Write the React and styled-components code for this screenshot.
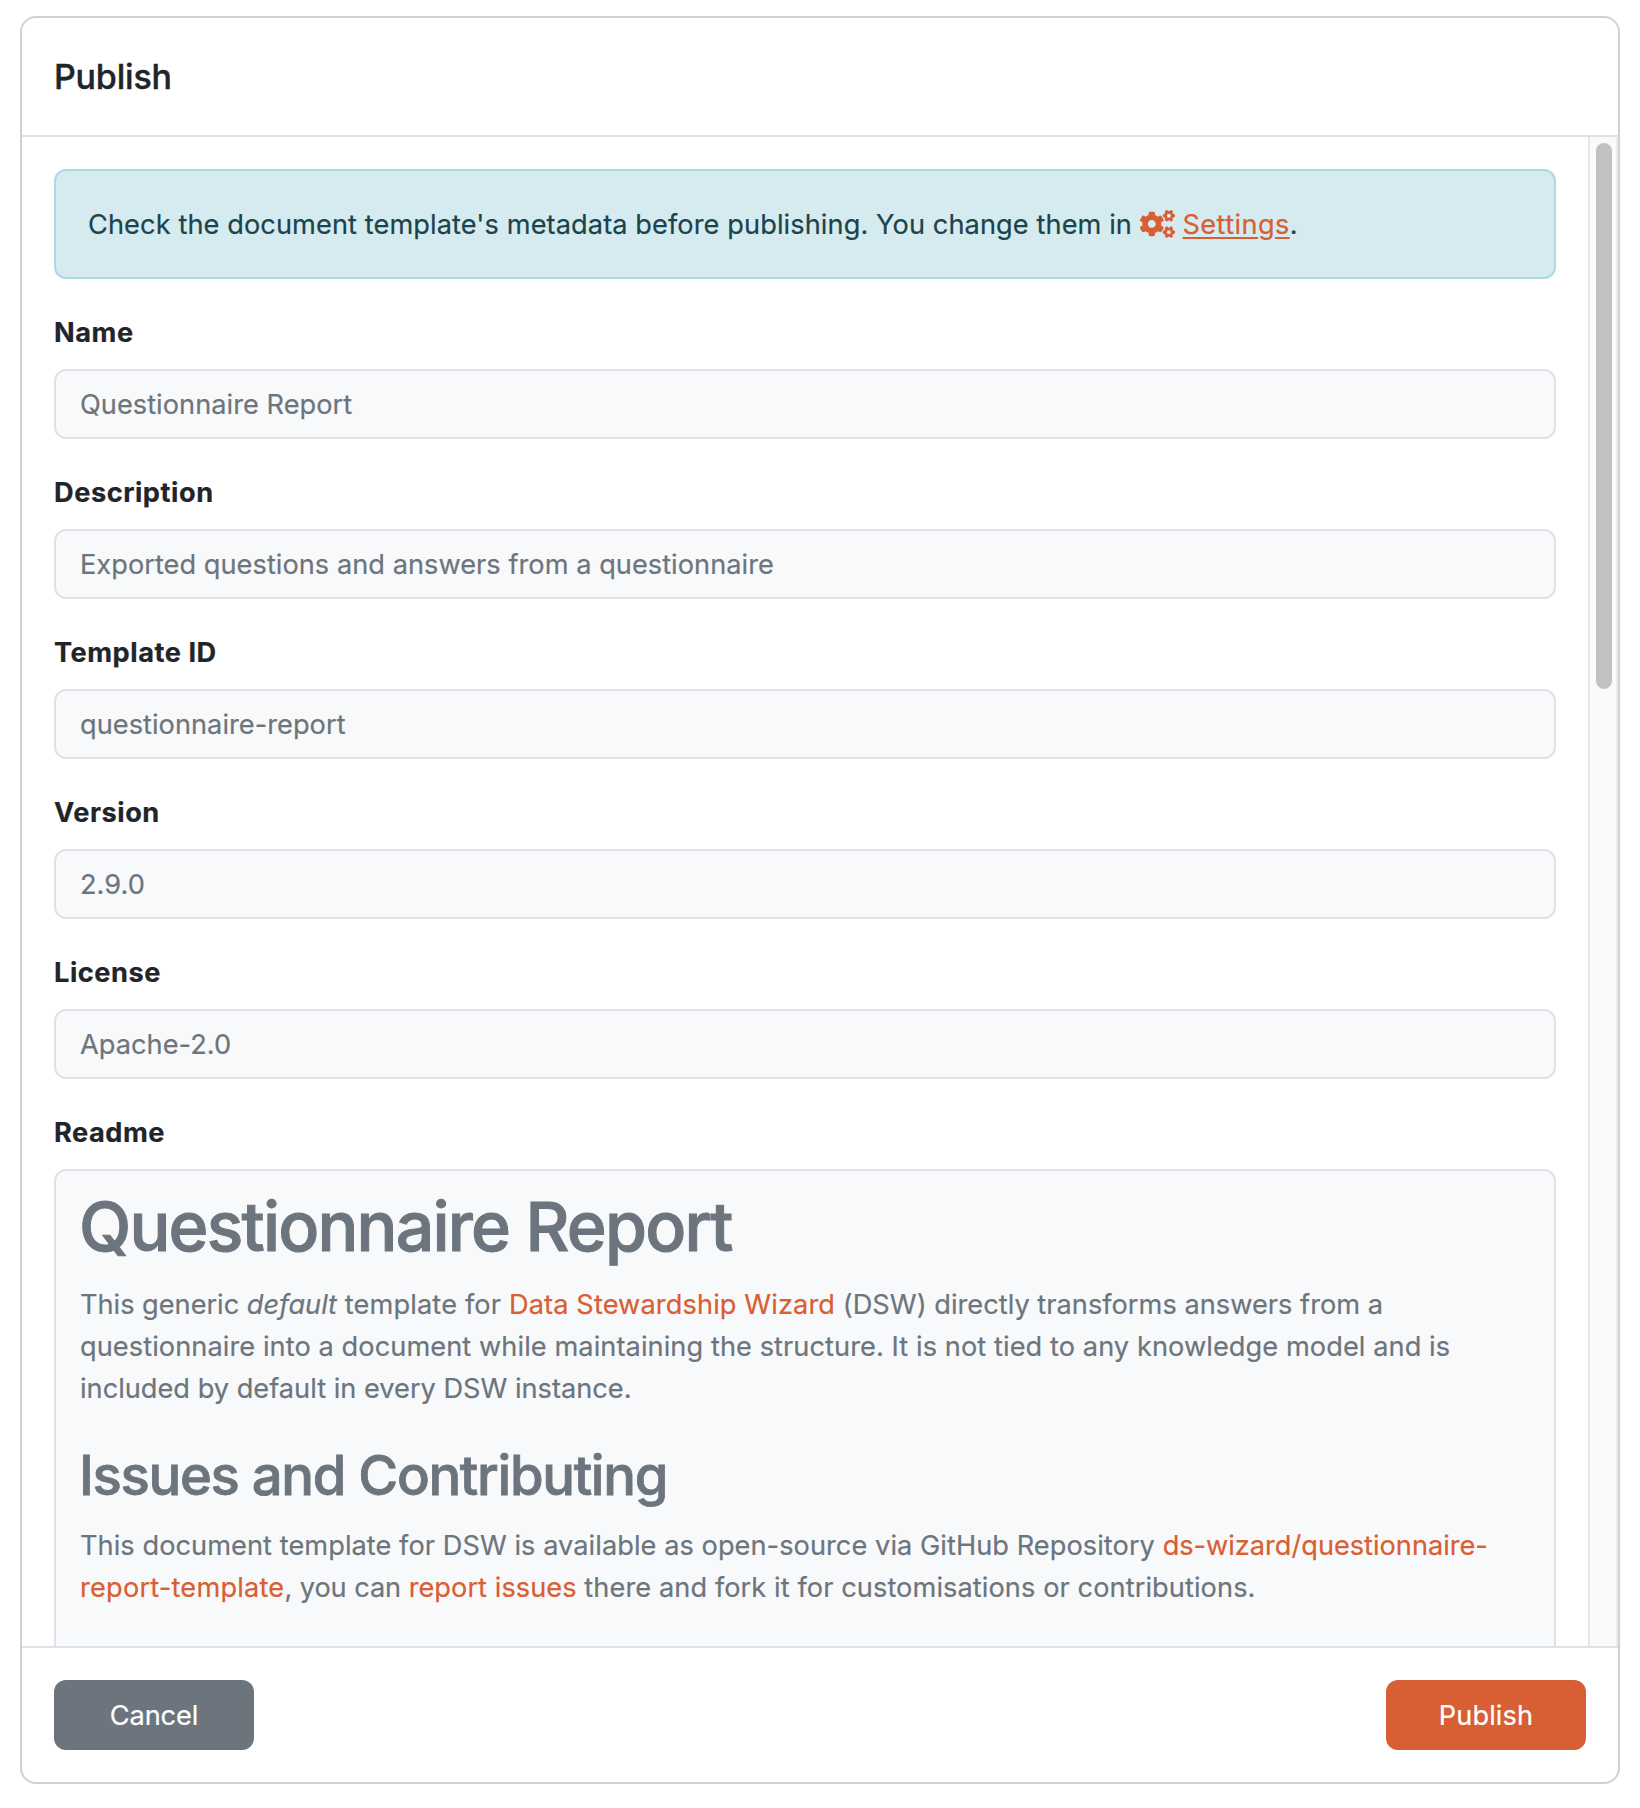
import React from "react";
import styled, { createGlobalStyle } from "styled-components";
import { FaCogs } from "react-icons/fa";

const GlobalStyle = createGlobalStyle`
  *, *::before, *::after { box-sizing: border-box; }
  body {
    margin: 0;
    background: #fff;
    color: #212529;
    font-family: Inter, "Liberation Sans", sans-serif;
    font-size: 27.2px;
    line-height: 42px;
    letter-spacing: 0.03px;
    -webkit-text-stroke-width: 0.2px;
  }
`;

const Page = styled.div`
  display: flex;
  height: 1808px;
  padding: 16px 20px 24px 20px;
`;

const Modal = styled.section`
  flex: 1;
  display: flex;
  flex-direction: column;
  min-width: 0;
  border: 2px solid #d0d0d0;
  border-radius: 16px;
  background: #fff;
  overflow: hidden;
`;

const Header = styled.header`
  flex: none;
  height: 119px;
  padding: 33px 32px 31px;
  border-bottom: 2px solid #dee2e6;
`;

const Title = styled.h5`
  margin: 0;
  font-size: 34px;
  font-weight: 500;
  line-height: 52.5px;
  letter-spacing: -0.2px;
  -webkit-text-stroke-width: 0.4px;
`;

const Body = styled.div`
  flex: 1;
  min-height: 0;
  display: flex;
`;

const Content = styled.div`
  flex: 1;
  min-width: 0;
  display: flex;
  flex-direction: column;
  gap: 32px;
  padding: 32px 32px 0;
  overflow: hidden;
`;

const ScrollTrack = styled.div`
  flex: none;
  width: 30px;
  padding: 6px 4px 0 6px;
  border-left: 2px solid #e7e7e7;
  border-right: 2px solid #ececec;
  background: #fafafa;
`;

const ScrollThumb = styled.div`
  width: 16px;
  height: 546px;
  border-radius: 8px;
  background: #c1c1c1;
`;

const Alert = styled.div`
  flex: none;
  height: 110px;
  padding: 33px 32px 31px;
  border: 2px solid #aed9e2;
  border-radius: 12px;
  background: #d6ebef;
  color: #1b434d;
  letter-spacing: 0.085px;
`;

const Link = styled.a`
  color: #d85e33;
  letter-spacing: ${(p) => p.$tracking ?? 0.05}px;
  text-decoration: ${(p) => (p.$underlined ? "underline" : "none")};
  text-decoration-thickness: 2px;
  text-underline-offset: 3px;
`;

const CogsIcon = styled(FaCogs)`
  width: 35px;
  height: 28px;
  color: #d85e33;
  vertical-align: -4px;
`;

const Field = styled.div`
  flex: none;
  display: flex;
  flex-direction: column;
  gap: 15px;
`;

const Label = styled.label`
  padding-top: 1px;
  font-weight: 700;
  letter-spacing: 0.53px;
`;

const Value = styled.div`
  padding: 13px 24px 11px;
  border: 2px solid #dee2e6;
  border-radius: 12px;
  background: #f8f9fa;
  color: #6c757d;
`;

const Readme = styled(Value)`
  height: 640px;
`;

const Heading1 = styled.h1`
  margin: 0 0 16px;
  font-size: 68px;
  font-weight: 500;
  line-height: 84px;
  letter-spacing: -1.8px;
  text-indent: -1px;
  -webkit-text-stroke-width: 1px;
`;

const Heading2 = styled.h2`
  margin: 0 0 16px;
  font-size: 54.4px;
  font-weight: 500;
  line-height: 67.2px;
  letter-spacing: -1.3px;
  text-indent: -1px;
  -webkit-text-stroke-width: 0.8px;
`;

const Paragraph = styled.p`
  margin: 0 0 32px;
`;

const Run = styled.span`
  letter-spacing: ${(p) => p.$tracking}px;
`;

const Footer = styled.footer`
  flex: none;
  display: flex;
  justify-content: space-between;
  padding: 32px;
  border-top: 2px solid #dee2e6;
`;

const Button = styled.button`
  width: 200px;
  height: 70px;
  padding: 1px 0 0;
  border: 0;
  border-radius: 12px;
  background: ${(p) => (p.$primary ? "#d85e33" : "#6c757d")};
  color: #fff;
  font: inherit;
  letter-spacing: ${(p) => (p.$primary ? 0.1 : -0.1)}px;
`;

const FIELDS = [
  ["Name", "Questionnaire Report"],
  ["Description", "Exported questions and answers from a questionnaire"],
  ["Template ID", "questionnaire-report"],
  ["Version", "2.9.0"],
  ["License", "Apache-2.0"],
];

export default function App() {
  return (
    <Page>
      <GlobalStyle />
      <Modal>
        <Header>
          <Title>Publish</Title>
        </Header>
        <Body>
          <Content>
            <Alert>
              Check the document template's metadata before publishing. You change them in{" "}
              <CogsIcon />{" "}
              <Link $underlined $tracking={0.4}>Settings</Link>.
            </Alert>
            {FIELDS.map(([label, value]) => (
              <Field key={label}>
                <Label>{label}</Label>
                <Value>{value}</Value>
              </Field>
            ))}
            <Field>
              <Label>Readme</Label>
              <Readme>
                <Heading1>Questionnaire Report</Heading1>
                <Paragraph>
                  <Run $tracking={-0.02}>This generic <em>default</em> </Run>
                  <Run $tracking={0.15}>template for </Run>
                  <Link $tracking={0.11}>Data Stewardship Wizard</Link>
                  <Run $tracking={0.02}> (DSW) directly transforms answers from a </Run>
                  <Run $tracking={0.07}>
                    questionnaire into a document while maintaining the structure. It is not tied
                    to any knowledge model and is{" "}
                  </Run>
                  <Run $tracking={0}>included by default in every DSW instance.</Run>
                </Paragraph>
                <Heading2>Issues and Contributing</Heading2>
                <Paragraph>
                  <Run $tracking={0.05}>
                    This document template for DSW is available as open-source via GitHub
                    Repository{" "}
                  </Run>
                  <Link $tracking={-0.02}>ds-wizard/questionnaire-</Link>
                  <Link $tracking={0.2}>report-template</Link>
                  <Run $tracking={-0.08}>, you can </Run>
                  <Link>report issues</Link>
                  <Run $tracking={0.08}>
                    {" "}there and fork it for customisations or contributions.
                  </Run>
                </Paragraph>
              </Readme>
            </Field>
          </Content>
          <ScrollTrack>
            <ScrollThumb />
          </ScrollTrack>
        </Body>
        <Footer>
          <Button>Cancel</Button>
          <Button $primary>Publish</Button>
        </Footer>
      </Modal>
    </Page>
  );
}
